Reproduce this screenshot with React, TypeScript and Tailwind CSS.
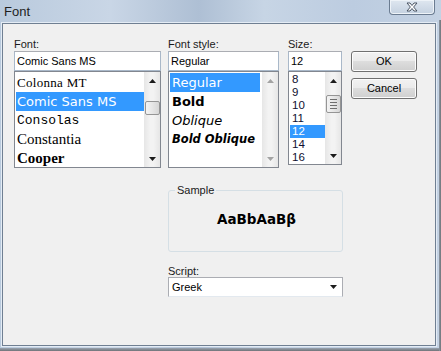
import type { ReactNode } from 'react';

const fontItems: Array<{ label: string; className: string; selected?: boolean }> = [
    { label: 'Colonna MT', className: "font-['Liberation_Serif',serif] text-[13px] tracking-[0.3px]" },
    { label: 'Comic Sans MS', className: "font-['Comic_Sans_MS','DejaVu_Sans',sans-serif] text-[13px]", selected: true },
    { label: 'Consolas', className: "font-['Liberation_Mono',monospace] text-[13px]" },
    { label: 'Constantia', className: "font-['Liberation_Serif',serif] text-[15px]" },
    { label: 'Cooper', className: "font-['Liberation_Serif',serif] text-[15px] font-black" },
];

const styleItems: Array<{ label: string; className: string; selected?: boolean }> = [
    { label: 'Regular', className: 'text-[13px]', selected: true },
    { label: 'Bold', className: 'text-[13px] font-bold' },
    { label: 'Oblique', className: 'text-[13px] italic' },
    { label: 'Bold Oblique', className: 'text-[11.5px] font-bold italic' },
];

const sizes = ['8', '9', '10', '11', '12', '14', '16'];

function Arrow({ down, disabled }: { down?: boolean; disabled?: boolean }) {
    return (
        <div className="flex h-[17px] items-center justify-center">
            <svg width="7" height="4" viewBox="0 0 7 4">
                <path d={down ? 'M0 0H7L3.5 4Z' : 'M0 4H7L3.5 0Z'} fill={disabled ? '#a3a3a3' : '#1c1c1c'} />
            </svg>
        </div>
    );
}

function ScrollBar({ thumbTop, thumbHeight, grip, disabled }: { thumbTop?: number; thumbHeight?: number; grip?: boolean; disabled?: boolean }) {
    return (
        <div className="flex w-[16px] shrink-0 flex-col bg-[linear-gradient(90deg,#e6e6e6,#f3f3f3_40%,#f3f3f3_60%,#e6e6e6)]">
            <Arrow disabled={disabled} />
            <div className="flex-1">
                {thumbHeight && (
                    <div
                        className="mx-auto flex w-[15px] flex-col items-center justify-center gap-[2px] rounded-[2px] border border-[#959595] bg-[linear-gradient(90deg,#f4f4f4,#e6e6e6_50%,#d6d6d6)]"
                        style={{ marginTop: thumbTop, height: thumbHeight }}
                    >
                        {grip && [0, 1, 2, 3].map(i => <div key={i} className="h-px w-[7px] bg-[#6e6e6e]" />)}
                    </div>
                )}
            </div>
            <Arrow down disabled={disabled} />
        </div>
    );
}

function ListBox({ height, children, scroll }: { height: number; children: ReactNode; scroll: ReactNode }) {
    return (
        <div className="flex border border-[#828790] bg-white" style={{ height }}>
            <div className="min-w-0 flex-1 overflow-hidden pt-[1px]">{children}</div>
            {scroll}
        </div>
    );
}

function TextBox({ value }: { value: string }) {
    return (
        <div className="flex h-[20px] items-center border border-[#a9b8c9] border-t-[#abadb3] bg-white px-[2px] text-black">
            {value}
        </div>
    );
}

function Button({ children }: { children: ReactNode }) {
    return (
        <div className="flex h-[21px] items-center justify-center rounded-[3px] border border-[#707070] bg-[linear-gradient(180deg,#f2f2f2_0%,#ebebeb_45%,#dddddd_50%,#cfcfcf_100%)] text-black shadow-[inset_0_0_0_1px_#fcfcfc]">
            {children}
        </div>
    );
}

export default function App() {
    return (
        <div className="relative h-[351px] w-[441px] overflow-hidden bg-[linear-gradient(90deg,#b9cadd_0%,#c9d6e6_25%,#aebfd4_45%,#c7d5e5_60%,#bccce0_80%,#c4d2e3_100%)] font-['Liberation_Sans',Arial,sans-serif] text-[11px] text-[#1a1a1a]">
            <div className="flex h-[23px] items-center pl-[4px] text-[13px] text-[#1e1e1e]">Font</div>

            <div className="absolute right-[6px] top-0 flex h-[15px] w-[46px] items-center justify-center rounded-b-[4px] border border-t-0 border-[#6b7c91] bg-[linear-gradient(180deg,#dfe7f0,#c4d1e0)] shadow-[inset_0_0_0_1px_#eef3f8]">
                <svg width="12" height="10" viewBox="0 0 12 10">
                    <path d="M1 1H4L6 3.5L8 1H11L7.6 5L11 9H8L6 6.5L4 9H1L4.4 5Z" fill="#ffffff" stroke="#3b4656" strokeWidth="0.9" strokeLinejoin="round" />
                </svg>
            </div>

            <div className="ml-[2px] h-[323px] w-[434px] border border-[#6f7f92] bg-[#f0f0f0] pl-[11px] pt-[12px] shadow-[0_0_0_1px_#e4ecf5]">
                <div className="flex items-start">
                    <div className="w-[147px]">
                        <div className="h-[15px]">Font:</div>
                        <TextBox value="Comic Sans MS" />
                        <ListBox height={97} scroll={<ScrollBar thumbTop={12} thumbHeight={14} />}>
                            {fontItems.map(item => (
                                <div
                                    key={item.label}
                                    className={`ml-[1px] flex h-[19px] items-center whitespace-nowrap pl-[1px] ${item.className} ${item.selected ? 'bg-[#3399ff] text-white' : 'text-black'}`}
                                >
                                    {item.label}
                                </div>
                            ))}
                        </ListBox>
                    </div>

                    <div className="ml-[7px] w-[111px]">
                        <div className="h-[15px]">Font style:</div>
                        <TextBox value="Regular" />
                        <ListBox height={97} scroll={<ScrollBar disabled />}>
                            {styleItems.map(item => (
                                <div
                                    key={item.label}
                                    className={`ml-[1px] mr-[2px] flex h-[19px] items-center whitespace-nowrap pl-[2px] font-['Comic_Sans_MS','DejaVu_Sans',sans-serif] ${item.className} ${item.selected ? 'bg-[#3399ff] text-white' : 'text-black'}`}
                                >
                                    {item.label}
                                </div>
                            ))}
                        </ListBox>
                    </div>

                    <div className="ml-[9px] w-[54px]">
                        <div className="h-[15px]">Size:</div>
                        <TextBox value="12" />
                        <ListBox height={94} scroll={<ScrollBar thumbTop={6} thumbHeight={18} grip />}>
                            {sizes.map(size => (
                                <div
                                    key={size}
                                    className={`ml-[1px] flex h-[13px] items-center pl-[2px] text-[11.5px] ${size === '12' ? 'bg-[#3399ff] text-white' : 'text-[#101030]'}`}
                                >
                                    {size}
                                </div>
                            ))}
                        </ListBox>
                    </div>

                    <div className="ml-[9px] mt-[15px] flex w-[66px] flex-col gap-[6px]">
                        <Button>OK</Button>
                        <Button>Cancel</Button>
                    </div>
                </div>

                <div className="ml-[154px] w-[175px]">
                    <fieldset className="mt-[15px] h-[69px] rounded-[3px] border border-[#d5dfe5]">
                        <legend className="ml-[6px] px-[2px] leading-[14px]">Sample</legend>
                        <div className="flex h-[44px] items-center justify-center pl-[2px] font-['Comic_Sans_MS','DejaVu_Sans',sans-serif] text-[13.5px] font-semibold text-black">
                            AaBbAaBβ
                        </div>
                    </fieldset>

                    <div className="mt-[11px] h-[15px]">Script:</div>
                    <div className="mt-[-1px] flex h-[20px] items-center justify-between border border-[#abadb3] border-b-[#e3e9ef] bg-white pl-[3px] pr-[5px] text-black">
                        <span>Greek</span>
                        <svg width="7" height="4" viewBox="0 0 7 4">
                            <path d="M0 0H7L3.5 4Z" fill="#1c1c1c" />
                        </svg>
                    </div>
                </div>
            </div>

            <div className="absolute bottom-0 left-0 h-[3px] w-full bg-[linear-gradient(180deg,#9aa4b0,#6f7378)]" />
            <div className="absolute right-0 top-[20px] h-full w-[2px] bg-[linear-gradient(90deg,#8e99a6,#6f7378)]" />
        </div>
    );
}
